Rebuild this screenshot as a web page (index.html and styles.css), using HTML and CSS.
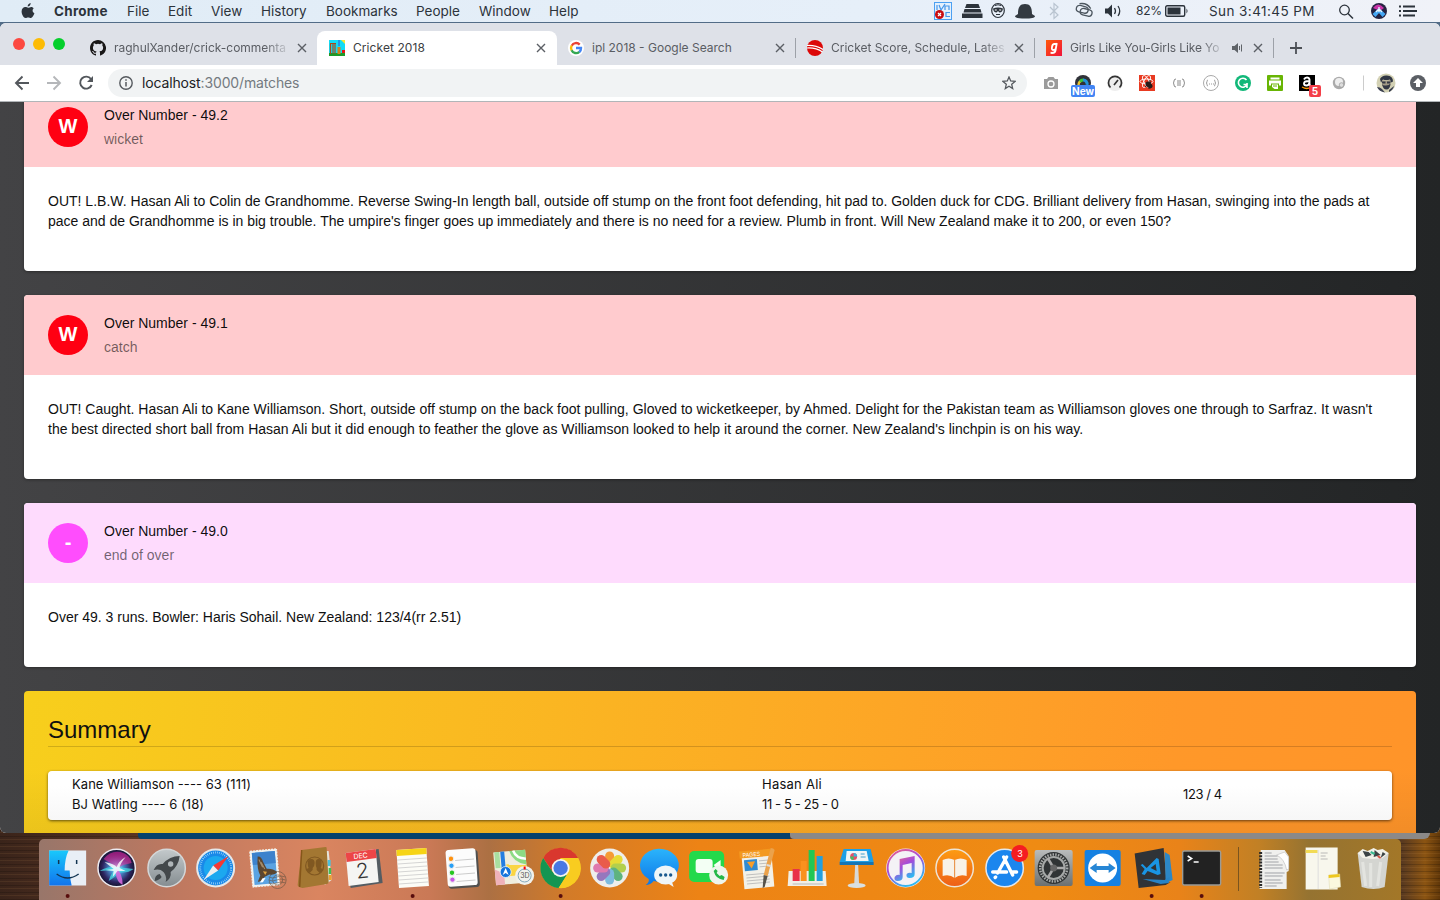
FILE: index.html
```
<!DOCTYPE html>
<html lang="en">
<head>
<meta charset="utf-8">
<title>Cricket 2018</title>
<link rel="stylesheet" href="styles.css">
</head>
<body>
<header class="menubar">
  <nav class="menus">
    <svg class="apple" viewBox="0 0 14 16"><path fill="#2c333b" d="M9.700 0c.1 1.900-1.300 3.500-3 3.500C6.500 1.800 8 .2 9.700 0zM12.600 5.400C11 6.500 11.200 9.300 13.400 10.300 12.800 12.200 11.400 15 9.800 15c-1 0-1.400-.6-2.600-.6s-1.700.6-2.600.6C2.600 15 .6 11.300.6 8.500c0-2.900 1.800-4.500 3.700-4.500 1.200 0 2 .7 2.900.7.800 0 1.700-.8 3.200-.8.900 0 1.700.5 2.200 1.500z"/></svg>
    <b class="app">Chrome</b><span>File</span><span>Edit</span><span>View</span><span>History</span><span>Bookmarks</span><span>People</span><span>Window</span><span>Help</span>
  </nav>
  <div class="status">
    <svg width="193" height="22" viewBox="934 0 193 22">
      <rect x="934.500" y="2.500" width="17" height="17" fill="#e4f0fc" stroke="#4ba0f2"/>
      <path d="M937 5v5M939 5l2 5 4-6M945 10V6h4v4M951 5.500M950 12.500h-4v4h4" fill="none" stroke="#4596ea" stroke-width="1.200"/>
      <circle cx="939.500" cy="14.500" r="4.500" fill="#c80d12"/><path d="M938 13l3 3m0-3l-3 3" stroke="#fff" stroke-width="1.200"/>
      <path d="M966.500 4h12l1.500 4h-15zM964.500 9h16l1 3.500h-18zM962 13.500h20.500V18H962z" fill="#2c333b"/>
      <ellipse cx="998" cy="10.500" rx="6.300" ry="7" fill="none" stroke="#2c333b" stroke-width="1.200"/><path d="M993 8.500q5-2 10 0-.5 4-3.500 4l-1.500-1.500-1.500 1.500q-3 0-3.500-4z" fill="#2c333b"/><path d="M994.800 10h2m2.400 0h2" stroke="#fff"/><path d="M996 14.500h4M995 5.500q3-1.500 6 0" stroke="#2c333b" fill="none"/>
      <path d="M1018 14c0-7 2-10 7-10s7 3 7 10l3 2c0 2-4 2.500-10 2.500s-10-.5-10-2.500z" fill="#333a41"/>
      <path d="M1050 7l8 8-4 3.500v-15l4 3.500-8 8" fill="none" stroke="#b9c4d0" stroke-width="1.200"/>
      <g fill="none" stroke="#4c565f" stroke-width="1.300" transform="rotate(14 1084 10.500)"><rect x="1076" y="6.500" width="12" height="6.500" rx="3.250"/><rect x="1080.500" y="8.500" width="12" height="6.500" rx="3.250"/><path d="M1078 5q7-3 12 2"/></g>
      <path d="M1105 8.500h3l4-4v13l-4-4h-3z" fill="#2c333b"/><path d="M1114.500 8q2 3 0 6M1118 6q3.500 5 0 10" fill="none" stroke="#2c333b" stroke-width="1.300"/>
    </svg>
    <span class="percent">82%</span>
    <svg class="battery" width="24" height="12"><rect x=".7" y=".7" width="19" height="10.600" rx="1.500" fill="none" stroke="#2c333b" stroke-width="1.400"/><rect x="2.500" y="2.500" width="13" height="7" fill="#2c333b"/><path d="M21.500 3.500q2 2.500 0 5z" fill="#2c333b"/></svg>
    <span class="clock">Sun 3:41:45 PM</span>
    <svg width="80" height="22" viewBox="1338 0 80 22">
      <circle cx="1344.500" cy="10" r="4.800" fill="none" stroke="#2c333b" stroke-width="1.300"/><path d="M1348 13.500l5 5" stroke="#2c333b" stroke-width="1.500"/>
      <circle cx="1379" cy="11" r="8" fill="#252342"/><path d="M1373 8q5-7 11 0l-4 3z" fill="#c934a8"/><path d="M1372.500 14l6.500-6 6.500 6-3 3-3.500-4-3.500 4z" fill="#45a8f5"/><path d="M1379 7v5M1376 12l3-3 3 3" stroke="#e9f6ff" stroke-width="1.300" fill="none"/>
      <path d="M1399 6.500h2m-2 4.500h2m-2 4.500h2M1403 6.500h12m-12 4.500h14m-14 4.500h12" stroke="#2c333b" stroke-width="1.800"/>
    </svg>
  </div>
</header>

<main class="window">
  <div class="tabs">
    <div class="lights"><i class="close"></i><i class="min"></i><i class="max"></i></div>
    <div class="tab tab-first">
      <svg class="fav" viewBox="0 0 16 16"><path fill="#191717" fill-rule="evenodd" d="M8 0C3.580 0 0 3.580 0 8c0 3.540 2.290 6.530 5.470 7.590.4.070.55-.17.55-.38 0-.19-.01-.82-.01-1.490-2.010.37-2.530-.49-2.690-.94-.09-.23-.48-.94-.82-1.130-.28-.15-.68-.52-.01-.53.63-.01 1.080.58 1.230.82.72 1.210 1.870.87 2.330.66.07-.52.28-.87.51-1.070-1.780-.2-3.640-.89-3.640-3.950 0-.87.31-1.590.82-2.150-.08-.2-.36-1.020.08-2.120 0 0 .67-.21 2.200.82a7.600 7.600 0 014 0c1.530-1.040 2.200-.82 2.200-.82.44 1.100.16 1.920.08 2.120.51.56.82 1.270.82 2.150 0 3.070-1.870 3.750-3.650 3.950.29.25.54.73.54 1.480 0 1.070-.01 1.930-.01 2.200 0 .21.15.46.55.38A8 8 0 008 0z"/></svg>
      <span class="title fade">raghulXander/crick-commenta</span>
      <svg class="x" viewBox="0 0 10 10"><path d="M1 1l8 8m0-8L1 9"/></svg>
    </div>
    <div class="tab active">
      <svg class="fav" viewBox="0 0 16 16"><path fill="#12dcf5" d="M0 0h16v16H0z"/><path fill="#f5e832" d="M12 0h4v4z"/><path d="M0 13h16v3H0z" fill="#1c9a28"/><path d="M1.500 14V3.500m2.500 10v-10m2 10v-10M1 3.500h6" stroke="#a74a19" stroke-width="1.200"/><path d="M8.500 7h3v7h-3z" fill="#d0841c"/><path d="M10 0v6" stroke="#3351d8"/><path d="M13 10h3v3h-3z" fill="#e61414"/></svg>
      <span class="title">Cricket 2018</span>
      <svg class="x" viewBox="0 0 10 10"><path d="M1 1l8 8m0-8L1 9"/></svg>
    </div>
    <div class="tab google">
      <svg class="fav" viewBox="0 0 16 16"><circle cx="8" cy="8" r="8" fill="#fff"/><g fill="none" stroke-width="2.400"><path stroke="#ea4335" d="M3.700 5.700A5 5 0 0111.700 4.600"/><path stroke="#fbbc05" d="M3.700 10.500a5 5 0 010-5"/><path stroke="#34a853" d="M3.600 10.200a5 5 0 007.800 1.700"/><path stroke="#4285f4" d="M8 8h5a5 5 0 01-1.700 4"/></g></svg>
      <span class="title">ipl 2018 - Google Search</span>
      <svg class="x" viewBox="0 0 10 10"><path d="M1 1l8 8m0-8L1 9"/></svg>
    </div>
    <div class="tab ruled">
      <svg class="fav" viewBox="0 0 16 16"><circle cx="8" cy="8" r="8" fill="#dc0808"/><path d="M0 5.500q9-.5 16 4M0 8q9-.5 15.500 4" fill="none" stroke="#fff" stroke-width="1.200"/></svg>
      <span class="title fade">Cricket Score, Schedule, Lates</span>
      <svg class="x" viewBox="0 0 10 10"><path d="M1 1l8 8m0-8L1 9"/></svg>
    </div>
    <div class="tab ruled audible">
      <svg class="fav" viewBox="0 0 16 16"><defs><linearGradient id="ga" x2="1" y2="1"><stop stop-color="#ff5a0a"/><stop offset="1" stop-color="#f0133c"/></linearGradient></defs><path d="M0 0h16v16H0z" fill="url(#ga)"/><path d="M10.800 3L9.500 10.500Q9 13 6 13l-1.500-.3M10.500 4H8.300Q6.500 4 6 7t1 3q2 0 2.500-1" fill="none" stroke="#fff" stroke-width="1.800"/></svg>
      <span class="title fade">Girls Like You-Girls Like Yo</span>
      <svg class="speaker" viewBox="0 0 11 10"><path d="M0 3h2.500L6 0v10L2.500 7H0z" fill="#5f6368"/><path d="M7.500 3v4M9.500 1.500v7" stroke="#5f6368"/></svg>
      <svg class="x" viewBox="0 0 10 10"><path d="M1 1l8 8m0-8L1 9"/></svg>
    </div>
    <div class="newtab"><svg width="12" height="12"><path d="M6 0v12M0 6h12" stroke="#4b4f55" stroke-width="1.800"/></svg></div>
  </div>

  <div class="toolbar">
    <svg class="navicons" viewBox="0 0 108 36">
      <g fill="none" stroke="#53575c" stroke-width="1.900"><path d="M29 18H16m6.500-6.500L16 18l6.500 6.500"/><path stroke="#b5b7ba" d="M47 18h13m-6.500-6.500L60 18l-6.500 6.500"/><path d="M91 14a6 6 0 10.700 6"/></g><path d="M93 11v6h-6z" fill="#53575c"/>
    </svg>
    <div class="address">
      <svg class="info" viewBox="0 0 14 14"><circle cx="7" cy="7" r="6.200" fill="none" stroke="#55595e" stroke-width="1.400"/><path d="M7 6v4.500M7 3.300v1.500" stroke="#55595e" stroke-width="1.500"/></svg>
      <span class="url"><b>localhost</b>:3000/matches</span>
      <svg class="star" viewBox="0 0 14 14"><path d="M7 1l1.700 4 4.400.4-3.400 2.900 1 4.300L7 10.300l-3.700 2.300 1-4.300L.9 5.400 5.300 5z" fill="none" stroke="#55595e" stroke-width="1.300"/></svg>
    </div>
    <div class="extensions">
      <svg width="405" height="36" viewBox="1035 65 405 36">
        <path d="M1044 79h3l1.500-2h5l1.500 2h3v10h-14z" fill="#9b9b9b"/><circle cx="1051" cy="84" r="3" fill="none" stroke="#fff" stroke-width="1.300"/>
        <circle cx="1083" cy="83" r="8" fill="#303238"/><path d="M1078.500 85a4.500 4.500 0 012-4" fill="none" stroke="#e8c332" stroke-width="2.500"/><path d="M1080 81.500a4 4 0 013.500-1.500" fill="none" stroke="#3cc33b" stroke-width="3"/><path d="M1083 80a4 4 0 014 5" fill="none" stroke="#2294d9" stroke-width="3"/>
        <circle cx="1115" cy="83" r="8" fill="#eee"/><path d="M1110.500 87.500a6.500 6.500 0 119 0M1114 85l4-5" fill="none" stroke="#333" stroke-width="1.700"/>
        <path d="M1139 75h16v16h-16z" fill="#e83a21"/><g fill="none" stroke="#fff" stroke-width=".9"><ellipse cx="1146.500" cy="81.500" rx="6.500" ry="2.500"/><ellipse cx="1146.500" cy="81.500" rx="6.500" ry="2.500" transform="rotate(60 1146.500 81.500)"/><ellipse cx="1146.500" cy="81.500" rx="6.500" ry="2.500" transform="rotate(120 1146.500 81.500)"/></g><ellipse cx="1149" cy="85" rx="4" ry="2.500" fill="#271c1a" transform="rotate(40 1149 85)"/><path d="M1145 87l6-5M1150 80l-1 9" stroke="#271c1a"/>
        <path d="M1176 79q-2 0-2 2t-1 2q1 0 1 2t2 2M1182 79q2 0 2 2t1 2q-1 0-1 2t-2 2M1177 81h4m-4 2h4m-4 2h4" fill="none" stroke="#888" stroke-width="1"/>
        <circle cx="1211" cy="83" r="7.500" fill="#fff" stroke="#aaa"/><path d="M1208 80q-1 0-1 1.500t-1 1.500q1 0 1 1.500t1 1.500M1214 80q1 0 1 1.500t1 1.500q-1 0-1 1.500t-1 1.500M1209 84h1m1 0h1m1 0h1" fill="none" stroke="#999"/>
        <circle cx="1243" cy="83" r="8" fill="#12b879"/><path d="M1246.500 80a4.500 4.500 0 10.500 4.500h-3.500M1247 83v5" fill="none" stroke="#fff" stroke-width="1.600"/>
        <rect x="1267" y="75" width="16" height="16" rx="1" fill="#68b504"/><path d="M1270.500 77.500h9v2h-9zM1269 80.500h12v5h-2v-2h-8v2h-2zM1272 84.500h6v4.500h-3.500l-2.500-2z" fill="#fff"/><path d="M1273 86h4" stroke="#68b504"/>
        <path d="M1299 75h16v16h-16z" fill="#000"/><path d="M1304 79.500q1-2 3-2t2.500 2v5l1 1.500M1309 81q-5 0-5 2.500 0 2 2.500 2t3-3" fill="none" stroke="#fff" stroke-width="1.900"/><path d="M1302 87q5 3 9 0" fill="none" stroke="#ff9900" stroke-width="1.300"/>
        <circle cx="1339" cy="83" r="6.200" fill="#ababab"/><circle cx="1339" cy="82" r="4" fill="#eee"/><circle cx="1341.500" cy="85" r="2.300" fill="#ddd" stroke="#999" stroke-width=".7"/>
        <path d="M1363.500 75.500v15" stroke="#ccc"/>
        <circle cx="1386" cy="83" r="9.500" fill="#d3d1b4"/><path d="M1380 79q2-4 7-3.500 6 .5 6 6l-2 1-1-3q-4 1-7 0l-2 3z" fill="#303643"/><path d="M1382 80q4 1 8 0l.5 5q-1 4-4 4t-4.500-4z" fill="#a39b86"/><path d="M1381.500 81.500h4v2h-3zM1387 81.500h4l-1 2h-3zM1382 84q1 2 4 1.500 3 0 4.500-2-.5 6-4 6t-4.500-5.500z" fill="#333844"/><path d="M1377 87q3 0 5 2l3 3.500q-6-1-8-5.500zM1389 90l5-4q-1 4-5 6z" fill="#3d4252"/>
        <circle cx="1418" cy="83" r="8" fill="#5b5f65"/><path d="M1418 78l5 5h-3v4h-4v-4h-3z" fill="#fff"/>
      </svg>
      <span class="badge new">New</span><span class="badge five">5</span>
    </div>
  </div>

  <section class="page">
    <article class="card">
      <div class="head wicket"><span class="ball">W</span><div><p class="over">Over Number - 49.2</p><p class="kind">wicket</p></div></div>
      <div class="text"><p class="wide">OUT! L.B.W. Hasan Ali to Colin de Grandhomme. Reverse Swing-In length ball, outside off stump on the front foot defending, hit pad to. Golden duck for CDG. Brilliant delivery from Hasan, swinging into the pads at</p><p>pace and de Grandhomme is in big trouble. The umpire's finger goes up immediately and there is no need for a review. Plumb in front. Will New Zealand make it to 200, or even 150?</p></div>
    </article>
    <article class="card">
      <div class="head wicket"><span class="ball">W</span><div><p class="over">Over Number - 49.1</p><p class="kind">catch</p></div></div>
      <div class="text"><p class="wide">OUT! Caught. Hasan Ali to Kane Williamson. Short, outside off stump on the back foot pulling, Gloved to wicketkeeper, by Ahmed. Delight for the Pakistan team as Williamson gloves one through to Sarfraz. It wasn't</p><p class="wide">the best directed short ball from Hasan Ali but it did enough to feather the glove as Williamson looked to help it around the corner. New Zealand's linchpin is on his way.</p></div>
    </article>
    <article class="card">
      <div class="head end"><span class="ball">-</span><div><p class="over">Over Number - 49.0</p><p class="kind">end of over</p></div></div>
      <div class="text short"><p>Over 49. 3 runs. Bowler: Haris Sohail. New Zealand: 123/4(rr 2.51)</p></div>
    </article>
    <article class="summary">
      <h2>Summary</h2>
      <div class="score">
        <div><p class="batsman">Kane Williamson ---- 63 (111)</p><p class="batsman">BJ Watling ---- 6 (18)</p></div>
        <div><p class="bowler">Hasan Ali</p><p class="figures">11 - 5 - 25 - 0</p></div>
        <div class="total">123 / 4</div>
      </div>
    </article>
  </section>
</main>

<footer class="desktop">
  <div class="behind"><div class="blue"></div><div class="gray"></div></div>
  <div class="dock">
    <svg viewBox="-24.65 -29 49.3 61"><defs><linearGradient id="fb" x2="0" y2="1"><stop stop-color="#19c8fb"/><stop offset="1" stop-color="#1174ed"/></linearGradient></defs><path d="M-18.500-17.500h37v35h-37z" fill="#e9eff6"/><path d="M-18.500-17.500H1q-4 8-4 20h5q0 8 2 15h-22.500z" fill="url(#fb)"/><path d="M-9-8v4M9-8v4M-11 6q11 8 22 0" fill="none" stroke="#123451" stroke-width="1.500"/><circle class="dot" cy="28" r="2"/></svg>
    <svg viewBox="-24.65 -29 49.3 61"><defs><radialGradient id="si"><stop stop-color="#b9f5ff"/><stop offset=".35" stop-color="#4a8fd0"/><stop offset=".75" stop-color="#2d2560"/><stop offset="1" stop-color="#14122c"/></radialGradient><linearGradient id="sp" x2="0" y2="1"><stop stop-color="#8d1a78"/><stop offset="1" stop-color="#f03fa8" stop-opacity=".5"/></linearGradient></defs><circle r="18.700" fill="url(#si)" stroke="#eceaf0" stroke-width="1.500"/><path d="M-13-9Q-6-18 4-16 14-13 15-5 8-4 0 0-6-5-13-9z" fill="url(#sp)"/><path d="M-17 3Q-8-2 0-1 9 0 17 1 10 6 2 4-1 9-8 13-7 8-3 3-10 2-17 3z" fill="#45dfe6" opacity=".75"/><path d="M0 0q6 6 6 17Q0 14-1 5z" fill="#d469dc" opacity=".9"/><path d="M-12-6Q-2-4 0-1q2-6 9-10Q3-4 3 0l6 3-8 0-5 6 1-6-8-1 8-1z" fill="#fff" opacity=".8"/></svg>
    <svg viewBox="-24.65 -29 49.3 61"><defs><linearGradient id="ro" x2="0" y2="1"><stop stop-color="#c3c9cb"/><stop offset="1" stop-color="#858d91"/></linearGradient></defs><circle r="18.700" fill="url(#ro)" stroke="#d4d7d8" stroke-width="1.500"/><path d="M13-12Q3-12-4-4q-6-1-9 6 4-1 7 0 4 2 5 6 1 2 0 6 6-4 5-10Q12-2 13-12zM-7 6q-5 1-5 7 5-1 7-4z" fill="#43484b"/><circle cx="4" cy="-4" r="2.700" fill="#afb5b8"/></svg>
    <svg viewBox="-24.65 -29 49.3 61"><circle r="18.500" fill="#1989e8" stroke="#e5e7e9" stroke-width="2"/><circle r="12" fill="#1ca8ef"/><circle r="15.500" fill="none" stroke="#bfe6ff" stroke-width="2" stroke-dasharray=".6 1.400"/><path d="M13-12L2.500 2.500-2.500-2.500z" fill="#f53a35"/><path d="M-12 12L2.500 2.500-2.500-2.500z" fill="#eee"/></svg>
    <svg viewBox="-24.65 -29 49.3 61"><g transform="rotate(-5)"><path d="M-14-18.500h28v37h-28z" fill="#f2f2ef"/><path d="M-14-18.500h28v37h-28z" fill="none" stroke="#d98358" stroke-width="1.200" stroke-dasharray="1 2"/><path d="M-11.500-16h23v32h-23z" fill="#5ba3e2"/><path d="M-11.500-16h23v12h-23z" fill="#3d82cc"/><path d="M-6-12q4 0 5 6l3 7q6 0 10 4-2 3-8 2l-5 2q-3 5-7 4l3-6q-3-6-1-19z" fill="#5c4630"/><path d="M-5-9l3 8M-3-6l3 7" stroke="#a58c6a"/><path d="M-3 10l-3 4 3 0 3-4z" fill="#fff"/><path d="M-2 3l4 1-2 3z" fill="#e0a13e"/></g><g fill="none" stroke="#5e503f" stroke-width=".9" opacity=".65"><circle cx="13" cy="12" r="8.500"/><circle cx="13" cy="12" r="5"/><path d="M4 9q4 2 8 0t9 0M4 12q4 2 8 0t9 0M4 15q4 2 8 0t9 0"/></g></svg>
    <svg viewBox="-24.65 -29 49.3 61"><path d="M12-17l3 0 3 29-7 5z" fill="#e5e4da"/><path d="M14-8h3v6h-3z" fill="#4cc1dc"/><path d="M15 0h2.500v6H15z" fill="#42bd54"/><path d="M15 7h3v5h-3z" fill="#eda132"/><path d="M-12-18l24-3q1 0 1 1l2 34q0 2-2 2l-24 4q-5-1-5-3z" fill="#a37732"/><path d="M-12-18l-2 37" stroke="#85561a" stroke-width="1.500"/><circle cx="1" cy="-2" r="9" fill="none" stroke="#805821" stroke-width="1.200"/><g fill="#805821"><path d="M-6-5q0-4 3.500-4T1-5q0 3-2 5v2l-3 3q-3-2-3-4l2-1q-1-2-1-5z"/><path d="M2-5q0-4 3-4t3 4q0 3-1 5l2 1q0 2-3 4L3 2V0q-1-2-1-5z"/></g></svg>
    <svg viewBox="-24.65 -29 49.3 61"><path d="M-18-14l33-5 4 34-32 5z" fill="#545c62"/><path d="M-18-15l30-4 3 33-30 4z" fill="#f5f5f3"/><path d="M-18-15l30-4 1 9-30 4z" fill="#ec4547"/><text x="-9" y="-10" font-size="7" fill="#fff" transform="rotate(-6)">DEC</text><text x="-8" y="10" font-size="21" fill="#343434" font-weight="300" transform="rotate(-6)">2</text></svg>
    <svg viewBox="-24.65 -29 49.3 61"><g transform="rotate(-4)"><path d="M-15-19h30v38h-30z" fill="#fcfcf7"/><path d="M-15-19h30v6h-30z" fill="#f6d416"/><path d="M-15-9h30m-30 4h30m-30 4h30m-30 4h30m-30 4h30m-30 4h30m-30 4h30" stroke="#ccc" stroke-width=".8"/></g><circle class="dot" cy="28" r="2"/></svg>
    <svg viewBox="-24.65 -29 49.3 61"><g transform="rotate(-4)"><rect x="-14" y="-17" width="31" height="37" rx="3" fill="#51504f"/><rect x="-15" y="-19" width="30" height="37" rx="3" fill="#fcfcfc"/><path d="M-6-8H13M-6-1H13M-6 6H13M-6 13H13" stroke="#ccc"/><g stroke="#eee"><circle cx="-10" cy="-10" r="2.700" fill="#ff9210"/><circle cx="-10" cy="-3" r="2.700" fill="#299ff5"/><circle cx="-10" cy="4" r="2.700" fill="#26c721"/><circle cx="-10" cy="11" r="2.700" fill="#c856e7"/></g></g></svg>
    <svg viewBox="-24.65 -29 49.3 61"><g transform="translate(-1 0) rotate(-5)"><path d="M-16-17h32v33h-32z" fill="#efeddd"/><path d="M0-17h16v15Q3-5 0-17z" fill="#8cdb84"/><path d="M4-17q2 8 12 9" fill="none" stroke="#fff" stroke-width="2.500"/><path d="M-4-4L16-2v10L-4 8z" fill="#fad542"/><path d="M-15-17h5v16h-5z" fill="#a9dfa0"/><path d="M-7-17V4" stroke="#247ee1" stroke-width="4"/><path d="M-16 0l9 5v11h-9z" fill="#efb2ba"/></g><circle cx="-6" cy="4" r="5.500" fill="#1474dc" stroke="#fff" stroke-width=".7"/><path d="M-6 0l3 7-3-2-3 2z" fill="#fff"/><circle cx="13" cy="7.500" r="9.500" fill="#f1f1ec"/><circle cx="13" cy="7.500" r="6.500" fill="none" stroke="#82a7bb"/><text x="8.500" y="10" font-size="7" fill="#555">3D</text><path d="M13-1.500v3" stroke="red" stroke-width="2"/></svg>
    <svg viewBox="-24.65 -29 49.3 61"><circle r="20" fill="#f8cc20"/><path d="M-17.500-10A20 20 0 0117.500-10H0L-8 4z" fill="#d9372e"/><path d="M-17.500-10A20 20 0 00-2 20L7 6 0 8-8 4z" fill="#149552"/><path d="M17.500-10A20 20 0 01-2 20L8 4 6-7 0-10z" fill="#f8cc20"/><circle r="9" fill="#f5f4ee"/><circle r="7.200" fill="#4878e3"/><circle class="dot" cy="28" r="2"/></svg>
    <svg viewBox="-24.65 -29 49.3 61"><circle r="19.500" fill="#eeeeec"/><g opacity=".88"><rect x="-4.500" y="-16.500" width="9" height="15.500" rx="4.500" fill="#f7901e"/><rect x="-4.500" y="-16.500" width="9" height="15.500" rx="4.500" fill="#e7d91e" transform="rotate(45)"/><rect x="-4.500" y="-16.500" width="9" height="15.500" rx="4.500" fill="#aacb38" transform="rotate(90)"/><rect x="-4.500" y="-16.500" width="9" height="15.500" rx="4.500" fill="#4bac71" transform="rotate(135)"/><rect x="-4.500" y="-16.500" width="9" height="15.500" rx="4.500" fill="#6eb5dd" transform="rotate(180)"/><rect x="-4.500" y="-16.500" width="9" height="15.500" rx="4.500" fill="#8b67b7" transform="rotate(225)"/><rect x="-4.500" y="-16.500" width="9" height="15.500" rx="4.500" fill="#dd6aa6" transform="rotate(270)"/><rect x="-4.500" y="-16.500" width="9" height="15.500" rx="4.500" fill="#e94735" transform="rotate(315)"/></g></svg>
    <svg viewBox="-24.65 -29 49.3 61"><defs><linearGradient id="me" x2="0" y2="1"><stop stop-color="#2bb4fb"/><stop offset="1" stop-color="#0d77e8"/></linearGradient></defs><path d="M-14 17q4-3 3-6a19.500 16.500 0 115 2q-3 4-8 4z" fill="url(#me)"/><ellipse cx="6" cy="7" rx="11.500" ry="9.500" fill="#eff5f8"/><path d="M6 14l8 5-2-6z" fill="#eff5f8"/><g fill="#19588e"><circle cx="1" cy="7" r="1.700"/><circle cx="6" cy="7" r="1.700"/><circle cx="11" cy="7" r="1.700"/></g></svg>
    <svg viewBox="-24.65 -29 49.3 61"><rect x="-19.500" y="-17" width="35" height="31" rx="5" fill="#23d94b"/><rect x="-13" y="-9" width="17" height="14" rx="3" fill="#f3fff4"/><path d="M5-3l7-5V4z" fill="#f3fff4"/><circle cx="10" cy="7" r="9.500" fill="#eef5ed"/><path d="M5 3q2 8 10 9l1-3-3-2-2 1-3-3 1-2-2-2z" fill="#24b748"/></svg>
    <svg viewBox="-24.65 -29 49.3 61"><g transform="rotate(-5)"><path d="M-15-16h30v36h-30z" fill="#f2f1e9"/><path d="M-17-18h31v7h-31z" fill="#f39a20"/><text x="-14" y="-12" font-size="5.500" fill="#fff">PAGES</text><path d="M-13-9H0V2h-13z" fill="#318bd1"/><path d="M-10-7h8l-4 7z" fill="#f99d28"/><path d="M2-7h10M2-4h10M2-1h10M-12 6h23m-23 3h23m-23 3h23m-23 3h23" stroke="#bbb" stroke-width=".9"/></g><path d="M13-20q3 0 4 2L10 8l-4-1z" fill="#eba24b"/><path d="M6 7l4 1-3 11-2 1z" fill="#56534b"/><path d="M9-3l4 1" stroke="#ddd" stroke-width="2"/></svg>
    <svg viewBox="-24.65 -29 49.3 61"><path d="M-18 3h37l1 15h-39z" fill="#f1eee5"/><path d="M-14 1h7v12h-7z" fill="#e93148"/><path d="M-6-7H0v20h-6z" fill="#f9911e"/><path d="M2-18h6v31H2z" fill="#21c755"/><path d="M10-12h6v25h-6z" fill="#22a0e0"/><path d="M-14 16h31" stroke="#bbb"/></svg>
    <svg viewBox="-24.65 -29 49.3 61"><path d="M-13-19h27l3 13h-34z" fill="#1d9fe6"/><path d="M-17-6h34v3h-34z" fill="#1675b4"/><path d="M-10-17h20l2 10h-23z" fill="#eff5f5"/><circle cx="-3" cy="-11.500" r="3.500" fill="#e94c66"/><path d="M-3-11.500V-15a3.500 3.500 0 013.500 3.500z" fill="#38b4d8"/><path d="M-3-11.500h-3.500a3.500 3.500 0 003.500 3.500z" fill="#42bf62"/><path d="M4-14h4m-4 3h5" stroke="#409fcb"/><path d="M-1.500-3h3l1 20h-5z" fill="#d7d9d8"/><ellipse cy="17.500" rx="9" ry="2.500" fill="#d9e0e2"/></svg>
    <svg viewBox="-24.65 -29 49.3 61"><defs><linearGradient id="mu" x1="0" y1="0" x2=".5" y2="1"><stop stop-color="#f16487"/><stop offset=".5" stop-color="#a34bdb"/><stop offset="1" stop-color="#31b8f0"/></linearGradient></defs><circle r="19.500" fill="#f1edf2"/><circle r="18" fill="#f4f2f6" stroke="url(#mu)" stroke-width="1.800"/><path d="M-6-9L9-12V6q0 4-5 4-4 0-3-4 2-2 5-1V-5l-9 2V9q0 4-5 4-4 0-3-4 2-3 5-2z" fill="url(#mu)"/></svg>
    <svg viewBox="-24.65 -29 49.3 61"><defs><linearGradient id="bo" x2="0" y2="1"><stop stop-color="#fd9c12"/><stop offset="1" stop-color="#ee5f17"/></linearGradient></defs><circle r="18.700" fill="url(#bo)" stroke="#eee4d4" stroke-width="1.500"/><path d="M0-8Q-6-11-12-8V8Q-5 6 0 10 5 6 12 8V-8Q6-11 0-8z" fill="#f8f2e8"/><path d="M0-8V10" stroke="#e78836"/></svg>
    <svg viewBox="-24.65 -29 49.3 61"><circle r="18.700" fill="#1b86ee" stroke="#e3e8ed" stroke-width="1.500"/><path d="M-1-11L8 7M2-11L-7 5M-12 4H2M7 4h5M-9 9l-.5.500M10 10" stroke="#fff" stroke-width="3.300" stroke-linecap="round"/><circle cx="15" cy="-14.500" r="8.500" fill="#f51d21"/><text x="12.500" y="-11.500" font-size="9" fill="#fff">3</text></svg>
    <svg viewBox="-24.65 -29 49.3 61"><defs><linearGradient id="se" x2="0" y2="1"><stop stop-color="#b9bcbc"/><stop offset="1" stop-color="#6b7071"/></linearGradient></defs><rect x="-19" y="-18" width="38" height="36" rx="2" fill="url(#se)"/><circle r="16" fill="#303435"/><circle r="13.500" fill="none" stroke="#a9abaa" stroke-width="2.500" stroke-dasharray="1.500 1.200"/><circle r="11" fill="none" stroke="#a5a8a7" stroke-width="2"/><path d="M0 0h11M0 0l-6-10M0 0l-6 10" stroke="#aaa" stroke-width="2.500"/><circle r="3.500" fill="#666"/></svg>
    <svg viewBox="-24.65 -29 49.3 61"><rect x="-18" y="-18" width="36" height="36" rx="2" fill="#1581e2"/><circle r="14.500" fill="#fff"/><path d="M-13 0l7-5v3H6v-3l7 5-7 5V2H-6v3z" fill="#2786d5"/></svg>
    <svg viewBox="-24.65 -29 49.3 61"><path d="M-18-14.500L11-20l3 35 4-1-5 3-27 3z" fill="#303337"/><path d="M12-16l5 3 3 25-7 3z" fill="#2c87c7"/><path d="M-10-4l4 4L4-10l2 1 2 15-3 1L-5 3l-3 4-3-1 3-5-4-4z" fill="#1995e5"/><path d="M3-4l1 7-6-3z" fill="#303337"/><path d="M-10 11l22 1 5-3-1 6-8 1z" fill="#2783c6"/><circle class="dot" cx="-1" cy="28" r="2"/></svg>
    <svg viewBox="-24.65 -29 49.3 61"><rect x="-19" y="-17" width="38" height="34" rx="1.500" fill="#222" stroke="#9a9b96" stroke-width="1.400"/><path d="M-14-12l4 2.500-4 2.500M-8-6h5" fill="none" stroke="#fff" stroke-width="1.500"/><circle class="dot" cy="28" r="2"/></svg>
    <i class="separator"></i>
    <svg viewBox="-24.65 -29 49.3 61"><path d="M-13-18h24l4 6V3l-2 1v17h-27z" fill="#f0f0ee"/><path d="M-13-16v36" stroke="#292929" stroke-width="3" stroke-dasharray="2 1.200"/><path d="M-9-15h7m-7 3H4m-13 3H4m-13 3H5m-14 3H9M-9 0H9M-9 5h20M-9 8h18m-18 4h16m-16 3h18m-18 3h12" stroke="#8d8f95" stroke-width=".8"/><path d="M3-13q8 4 10 15l2-1V-11l-4-5z" fill="#fff" stroke="#bbb" stroke-width=".6"/></svg>
    <svg viewBox="-24.65 -29 49.3 61"><path d="M-17-20.500h32v42h-32z" fill="#f8f7ed"/><path d="M-17-18h12v3h-12z" fill="#f2db55"/><path d="M-4.500-18v39" stroke="#ddd"/><path d="M-2-15h7m-7 3h5m-5 3h7" stroke="#aaa" stroke-width=".8"/><path d="M6 7l11-1 1 13-11 2z" fill="#faf8df" stroke="#ded9b0" stroke-width=".5"/><path d="M6 7l11-1v3L6 10z" fill="#eec820"/></svg>
    <svg viewBox="-24.65 -29 49.3 61"><path d="M-15-15h31l-4 34q-11 4-23 0z" fill="#d4d5d1"/><path d="M-15-15l5-4 5 2 6-3 4 2 5-1 6 4-6 5-10 1-10-1z" fill="#f2f1e9"/><path d="M-10-17l6 1 3 3-6 2zM2-18l6 5-7 2zM10-16l3 2-5 4z" fill="#3b4345"/><path d="M-2-16l4 2" stroke="#39b992" stroke-width="2"/><path d="M5-12l3 2" stroke="#d75142" stroke-width="2"/><path d="M-10-6l3 24M-2-5v24M8-6L5 18" stroke="#eeeeea" stroke-width="3" opacity=".6"/></svg>
  </div>
</footer>
</body>
</html>
```
FILE: styles.css
```
* { box-sizing: border-box; }
body { margin: 0; width: 1440px; height: 900px; overflow: hidden; display: flex; flex-direction: column; background: #526c87; font-family: Inter, "Noto Sans", sans-serif; }
p, h2 { margin: 0; }
svg { display: block; flex: none; }

/* Menu bar */
.menubar { height: 22px; flex: none; display: flex; justify-content: space-between; background: linear-gradient(90deg, #e0ecf6, #e6eff9 60%, #f0f2f8); color: #2c333b; font-size: 13.500px; line-height: 22px; white-space: nowrap; }
.menus { display: grid; grid-template-columns: 33px 73px 41px 43px 50px 65px 90px 63px 70px 60px; padding-left: 21px; letter-spacing: 0; }
.apple { width: 14px; height: 16px; margin-top: 3px; }
.app { font-weight: 700; letter-spacing: .25px; }
.status { display: flex; width: 506px; }
.percent { width: 29px; margin-left: 9px; font-size: 12px; letter-spacing: -.2px; }
.battery { margin-top: 5px; }
.clock { width: 129px; margin-left: 20px; letter-spacing: .42px; }

/* Browser window */
.window { height: 810px; flex: none; margin-top: 1px; border-radius: 6px; overflow: hidden; background: #fff; position: relative; z-index: 1; }
.tabs { height: 42px; display: flex; background: #dee1e8; padding-left: 13px; }
.lights { display: flex; gap: 8px; width: 65px; padding-top: 15px; }
.lights i { width: 12px; height: 12px; border-radius: 50%; }
.close { background: #fc4840; }
.min { background: #fdbb05; }
.max { background: #05cf2c; }
.tab { width: 239px; margin-top: 8px; height: 34px; padding-left: 12px; display: flex; align-items: center; font-size: 12px; color: #5a5d63; white-space: nowrap; position: relative; }
.active { width: 240px; background: #fff; border-radius: 8px 8px 0 0; color: #3b3e42; }
.active .title { letter-spacing: .07px; }
.google { width: 238px; padding-left: 11px; }
.ruled::before { content: ""; width: 1px; height: 20px; background: #9da1a8; position: absolute; left: 0; top: 7px; }
.fav { width: 16px; height: 16px; margin-right: 8px; }
.title { width: 175px; line-height: 16px; padding-bottom: 1px; }
.fade { -webkit-mask-image: linear-gradient(90deg, #000 86%, rgba(0,0,0,.1)); mask-image: linear-gradient(90deg, #000 86%, rgba(0,0,0,.1)); letter-spacing: -.02px; }
.x { width: 10px; height: 10px; margin-left: 8px; fill: none; stroke: #5b5f65; stroke-width: 1.400; }
.audible .title { width: 153px; letter-spacing: -.1px; }
.speaker { width: 11px; height: 10px; margin-left: 9px; }
.audible .x { margin-left: 10px; }
.newtab { width: 35px; padding: 19px 0 0 17px; position: relative; }
.newtab::before { content: ""; position: absolute; left: 0; top: 15px; width: 1px; height: 20px; background: #9da1a8; }
.toolbar { height: 37px; display: flex; border-bottom: 1px solid #b1b5b8; background: #fff; }
.navicons { width: 108px; height: 36px; }
.address { width: 919px; height: 28px; margin-top: 4px; border-radius: 14px; background: #f1f3f4; display: flex; align-items: center; padding: 0 11px; }
.info { width: 14px; height: 14px; margin-right: 9px; }
.url { flex: 1; color: #747a80; font-size: 14px; letter-spacing: -.14px; padding-bottom: 1px; }
.url b { font-weight: 400; color: #202124; }
.star { width: 14px; height: 14px; }
.extensions { margin-left: 8px; position: relative; }
.badge { position: absolute; color: #fff; font: 700 10px/12px Inter, sans-serif; text-align: center; border-radius: 2px; }
.new { left: 36px; top: 20px; width: 24px; background: #4285f4; }
.five { left: 274px; top: 20px; width: 12px; background: #f43e48; }

/* Commentary feed */
.page { height: 731px; overflow: hidden; padding: 0 24px; background: linear-gradient(90deg, #434345, #232526); font: 14px/20px "Liberation Sans", Arial, sans-serif; color: #101010; }
.card { background: #fff; border-radius: 4px; overflow: hidden; margin-bottom: 24px; box-shadow: 0 1px 3px rgba(0,0,0,.35); }
.card:first-child { margin-top: -15px; }
.head { height: 80px; padding: 16px 24px; display: flex; align-items: center; gap: 16px; line-height: 24px; }
.wicket { background: #ffcbce; }
.end { background: #fedbfd; }
.ball { width: 40px; height: 40px; border-radius: 50%; background: #ff0012; color: #fff; font: 700 20px/39px "Liberation Sans", Arial, sans-serif; text-align: center; }
.end .ball { background: #ff4dfd; }
.over { color: rgba(0,0,0,.94); }
.kind { color: rgba(0,0,0,.56); }
.text { height: 104px; padding: 24px; white-space: nowrap; }
.short { height: 84px; }
.wide { letter-spacing: .005px; }

/* Summary */
.summary { height: 170px; border-radius: 4px; padding: 22px 24px 0; background: linear-gradient(rgba(0,0,0,0) 80px, rgba(0,0,0,.05) 142px), linear-gradient(98deg, #f7cf1c, #ff9829 82%, #ff9429); }
.summary h2 { height: 34px; border-bottom: 1px solid rgba(0,0,0,.16); font-size: 24px; font-weight: 400; line-height: 34px; }
.score { height: 49px; margin-top: 24px; border-radius: 4px; background: linear-gradient(#fff 30%, #f7f7f7); box-shadow: 0 1px 3px rgba(0,0,0,.6); display: grid; grid-template-columns: 690px 421px 1fr; padding: 3px 24px 0; font: 13px/20px Inter, sans-serif; }
.batsman { letter-spacing: .05px; }
.bowler { letter-spacing: .25px; }
.figures { letter-spacing: -.38px; }
.total { line-height: 41px; letter-spacing: -.4px; }

/* Desktop and dock */
.desktop { height: 73px; margin-top: -6px; flex: none; padding-top: 6px; background: repeating-linear-gradient(0deg, rgba(0,0,0,.18) 0 1px, transparent 1px 4px, rgba(255,190,110,.08) 4px 5px, transparent 5px 7px), linear-gradient(90deg, #3a241a 0, #5a3423 138px, #543721 1400px, #8b5412 1425px, #603709); }
.behind { height: 6px; display: flex; padding-left: 138px; }
.blue { width: 652px; background: #05416c; border-radius: 0 0 0 4px; }
.gray { width: 640px; background: #8b8988; border-radius: 0 0 6px 4px; }
.dock { height: 61px; margin: 0 39px; padding-left: 4px; border-radius: 5px 5px 0 0; display: flex; background: linear-gradient(90deg, #98766a 0, #bd7860 130px, #da8560 280px, #ca7956 390px, #ac7043 450px, #d37b28 530px, #ed8315 660px, #ef8b13 1000px, #e98319 1140px, #c18025 1220px, #957331 1270px, #a37728); font-family: Inter, sans-serif; }
.dock svg { width: 49.300px; height: 61px; overflow: visible; }
.dot { fill: #580d0d; }
.separator { width: 23px; flex: none; background: linear-gradient(#7b541e, #7b541e) 12px 8px / 1px 44px no-repeat; }
```
